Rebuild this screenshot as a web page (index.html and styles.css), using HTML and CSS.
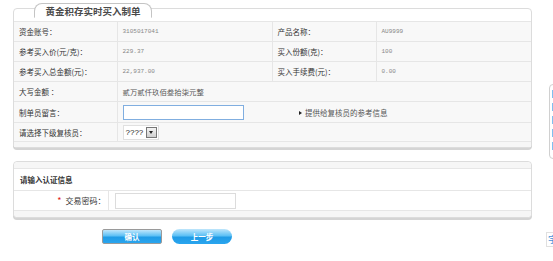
FILE: index.html
```html
<!DOCTYPE html>
<html lang="zh-CN">
<head>
    <meta charset="UTF-8">
    <title>黄金积存实时买入制单</title>
    <link rel="stylesheet" href="styles.css">
</head>
<body>
    <div class="wrap">
        <div class="panel">
            <div class="tab">黄金积存实时买入制单</div>
            <table class="grid">
                <colgroup>
                    <col class="c1"><col class="c2"><col class="c3"><col class="c4">
                </colgroup>
                <tr>
                    <td class="lbl">资金账号：</td>
                    <td class="num">3105017041</td>
                    <td class="lbl">产品名称：</td>
                    <td class="num">AU9999</td>
                </tr>
                <tr>
                    <td class="lbl">参考买入价(元/克)：</td>
                    <td class="num">229.37</td>
                    <td class="lbl">买入份额(克)：</td>
                    <td class="num">100</td>
                </tr>
                <tr>
                    <td class="lbl">参考买入总金额(元)：</td>
                    <td class="num">22,937.00</td>
                    <td class="lbl">买入手续费(元)：</td>
                    <td class="num">0.00</td>
                </tr>
                <tr>
                    <td class="lbl">大写金额 ：</td>
                    <td class="txt" colspan="3">贰万贰仟玖佰叁拾柒元整</td>
                </tr>
                <tr class="tall">
                    <td class="lbl">制单员留言：</td>
                    <td class="plain"><input class="memo" type="text"></td>
                    <td class="plain hint" colspan="2"><span class="arrow"></span>提供给复核员的参考信息</td>
                </tr>
                <tr class="short">
                    <td class="lbl">请选择下级复核员：</td>
                    <td class="plain" colspan="3">
                        <span class="select"><span class="sel-text">????</span><span class="sel-btn"></span></span>
                    </td>
                </tr>
            </table>
            <div class="foot"></div>
        </div>

        <div class="panel second">
            <div class="band"></div>
            <table class="grid auth">
                <colgroup>
                    <col class="a1"><col class="a2">
                </colgroup>
                <tr>
                    <td class="head" colspan="2">请输入认证信息</td>
                </tr>
                <tr>
                    <td class="pwd-lbl"><span class="star">*</span>交易密码：</td>
                    <td class="plain"><input class="pwd" type="password"></td>
                </tr>
            </table>
            <div class="band low"></div>
        </div>

        <div class="actions">
            <button class="btn ok" type="button">确认</button>
            <button class="btn back" type="button">上一步</button>
        </div>
    </div>

    <div class="side-tool"><span></span><span></span><span></span><span></span><span></span></div>
    <div class="side-font">字</div>
</body>
</html>
```

FILE: styles.css
```css
body {
    margin: 0;
    background-color: #fff;
    font-family: "Noto Sans CJK SC", "Noto Sans", sans-serif;
    color: #333;
}
.wrap {
    width: 519px;
    margin-left: 13px;
    padding-top: 8px;
}
.panel {
    border: 1px solid #dcdcdc;
    border-radius: 4px;
    background-color: #fff;
    box-shadow: 0 2px 0 #d4d4d4;
    padding-top: 11px;
}
.tab {
    width: 116px;
    height: 13px;
    margin: -17px 0 3px 20px;
    border: 1px solid #c4c4c4;
    border-bottom-color: transparent;
    border-radius: 8px 8px 0 0;
    background-color: #fff;
    font-family: "Noto Sans CJK SC", serif;
    font-weight: bold;
    font-size: 9.5px;
    line-height: 14px;
    color: #4a4a4a;
    text-align: center;
}
.grid {
    width: 100%;
    border-collapse: collapse;
    table-layout: fixed;
}
.c1 { width: 103px; }
.c2 { width: 155px; }
.c3 { width: 104px; }
.a1 { width: 94px; }
.grid td {
    height: 19px;
    padding: 0 0 0 5px;
    border-top: 1px solid #e6e6e6;
    border-right: 1px solid #e6e6e6;
    background-color: #f8f8f8;
    font-size: 7.5px;
    white-space: nowrap;
}
.grid td:last-child {
    border-right: none;
}
.grid .num {
    font-family: "Liberation Mono", monospace;
    font-size: 6px;
    color: #888;
}
.grid .txt {
    color: #555;
    font-size: 7.4px;
}
.grid .plain {
    border-right: none;
}
.tall td { height: 20px; }
.short td { height: 18px; }
.memo {
    display: block;
    box-sizing: border-box;
    width: 121px;
    height: 15px;
    margin: 0;
    border: 1px solid #80aee0;
    background-color: #fff;
}
.hint {
    padding-left: 27px !important;
    color: #555;
}
.arrow {
    display: inline-block;
    width: 0;
    height: 0;
    margin-right: 3px;
    border-left: 3px solid #222;
    border-top: 2px solid transparent;
    border-bottom: 2px solid transparent;
    vertical-align: 1px;
}
.select {
    display: inline-flex;
    align-items: center;
    height: 13px;
    border: 1px solid #e0e0e0;
    background-color: #fff;
    vertical-align: middle;
}
.sel-text {
    padding: 0 3px 0 2px;
    font-family: "Liberation Sans", sans-serif;
    font-size: 8px;
    color: #222;
}
.sel-btn {
    position: relative;
    width: 9px;
    height: 9px;
    margin-right: 1px;
    border: 1px solid #777;
    background: linear-gradient(#f4f4f4, #cfcfcf);
}
.sel-btn::after {
    content: "";
    position: absolute;
    left: 2px;
    top: 3px;
    border-top: 3px solid #222;
    border-left: 2.5px solid transparent;
    border-right: 2.5px solid transparent;
}
.foot {
    height: 5px;
    border-top: 1px solid #e6e6e6;
    background-color: #f6f6f6;
}
.second {
    margin-top: 13px;
    padding-top: 0;
}
.band {
    height: 6px;
    background-color: #f6f6f6;
    border-radius: 4px 4px 0 0;
}
.band.low {
    border-top: 1px solid #e6e6e6;
    border-radius: 0 0 4px 4px;
}
.auth td {
    background-color: #fff;
}
.auth .head {
    height: 21px;
    padding-left: 6px;
    font-weight: bold;
    font-size: 7.5px;
    color: #333;
}
.auth .pwd-lbl {
    padding: 0 2px 0 0;
    text-align: right;
    font-size: 8px;
    color: #333;
}
.auth .plain {
    padding-left: 6px;
}
.star {
    color: #e02020;
    margin-right: 4px;
    font-size: 9px;
}
.pwd {
    display: block;
    box-sizing: border-box;
    width: 121px;
    height: 16px;
    margin: 0;
    border: 1px solid #dcdcdc;
    background-color: #fff;
}
.actions {
    display: flex;
    gap: 10px;
    padding: 11px 0 0 89px;
}
.btn {
    width: 60px;
    height: 15px;
    padding: 0;
    border: none;
    border-radius: 8px;
    background: linear-gradient(#bfe6fb 0%, #5cc0f5 45%, #1f9be6 55%, #2aa5ee 100%);
    color: #fff;
    font-family: "Noto Sans CJK SC", sans-serif;
    font-weight: bold;
    font-size: 7.5px;
}
.btn.ok {
    border: 1px solid #9a9a9a;
    border-radius: 2px;
}
.side-tool {
    position: absolute;
    left: 549px;
    top: 84px;
    width: 20px;
    height: 75px;
    border: 1px solid #d0d0d0;
    border-radius: 4px;
    background-color: #fff;
    display: flex;
    flex-direction: column;
    gap: 5px;
    padding: 5px 0 0 2px;
    box-sizing: border-box;
}
.side-tool span {
    display: block;
    width: 12px;
    height: 8px;
    background-color: #7fc0f0;
}
.side-font {
    position: absolute;
    left: 546px;
    top: 232px;
    width: 14px;
    height: 13px;
    border: 1px solid #e0e0e0;
    font-size: 9px;
    line-height: 13px;
    color: #4a90d8;
    padding-left: 1px;
}
```
